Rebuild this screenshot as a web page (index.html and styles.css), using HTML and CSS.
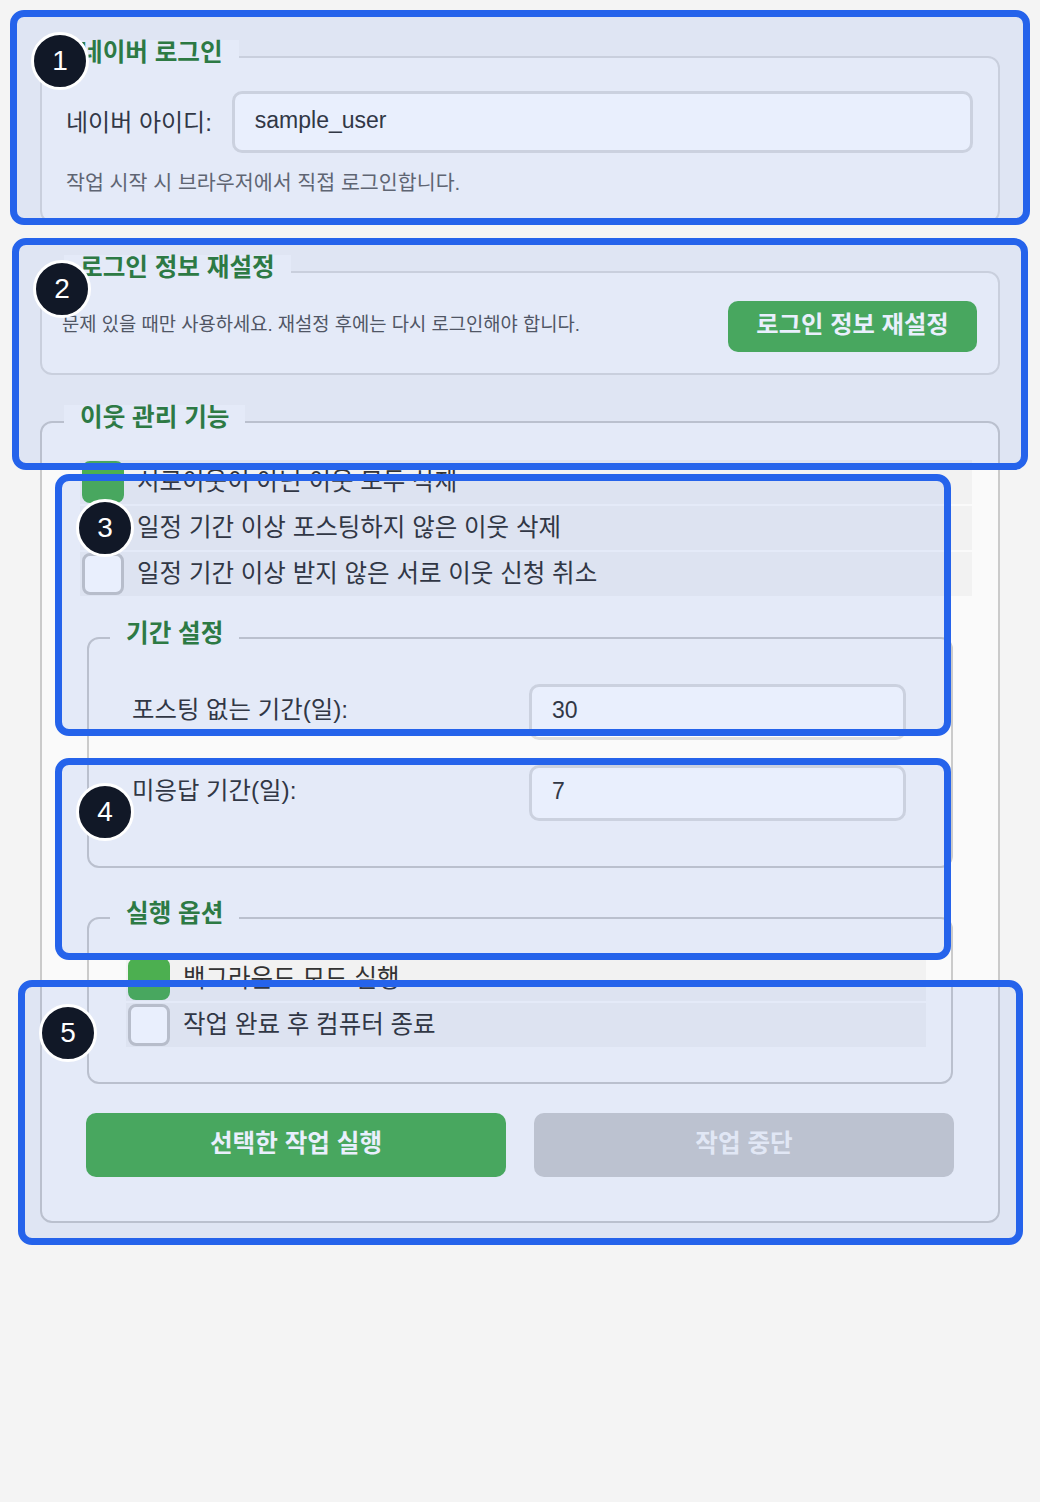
FILE: index.html
```html
<!DOCTYPE html>
<html lang="ko">
<head>
<meta charset="utf-8">
<title>블로그 이웃 관리</title>
<link rel="stylesheet" href="styles.css">
</head>
<body>
<main class="page">
  <fieldset class="panel panel-login">
    <legend>네이버 로그인</legend>
    <div class="login-body">
      <div class="field-row">
        <label class="field-label" for="naver-id">네이버 아이디:</label>
        <input id="naver-id" class="text-input" type="text" value="sample_user">
      </div>
      <p class="hint">작업 시작 시 브라우저에서 직접 로그인합니다.</p>
    </div>
  </fieldset>

  <fieldset class="panel panel-reset">
    <legend>로그인 정보 재설정</legend>
    <div class="reset-row">
      <p class="hint hint-small">문제 있을 때만 사용하세요. 재설정 후에는 다시 로그인해야 합니다.</p>
      <button class="btn btn-green btn-reset" type="button">로그인 정보 재설정</button>
    </div>
  </fieldset>

  <fieldset class="panel panel-neighbors">
    <legend>이웃 관리 기능</legend>
    <div class="neighbors-body">
      <div class="check-list">
        <label class="check-row"><input type="checkbox" checked><span>서로이웃이 아닌 이웃 모두 삭제</span></label>
        <label class="check-row"><input type="checkbox" checked><span>일정 기간 이상 포스팅하지 않은 이웃 삭제</span></label>
        <label class="check-row"><input type="checkbox"><span>일정 기간 이상 받지 않은 서로 이웃 신청 취소</span></label>
      </div>

      <fieldset class="sub-panel sub-period">
        <legend>기간 설정</legend>
        <div class="period-body">
          <div class="period-row">
            <label class="field-label" for="no-post-days">포스팅 없는 기간(일):</label>
            <input id="no-post-days" class="text-input period-input" type="text" value="30">
          </div>
          <div class="period-row">
            <label class="field-label" for="no-reply-days">미응답 기간(일):</label>
            <input id="no-reply-days" class="text-input period-input" type="text" value="7">
          </div>
        </div>
      </fieldset>

      <fieldset class="sub-panel sub-options">
        <legend>실행 옵션</legend>
        <div class="options-body">
          <div class="check-list">
            <label class="check-row"><input type="checkbox" checked><span>백그라운드 모드 실행</span></label>
            <label class="check-row"><input type="checkbox"><span>작업 완료 후 컴퓨터 종료</span></label>
          </div>
        </div>
      </fieldset>

      <div class="actions">
        <button class="btn btn-green btn-run" type="button">선택한 작업 실행</button>
        <button class="btn btn-stop" type="button" disabled>작업 중단</button>
      </div>
    </div>
  </fieldset>
</main>

<div class="marks" aria-hidden="true">
  <div class="mark mark-1"><span class="badge">1</span></div>
  <div class="mark mark-2"><span class="badge">2</span></div>
  <div class="mark mark-3"><span class="badge">3</span></div>
  <div class="mark mark-4"><span class="badge">4</span></div>
  <div class="mark mark-5"><span class="badge">5</span></div>
</div>
</body>
</html>
```

FILE: styles.css
```css
* {
  box-sizing: border-box;
}

html,
body {
  margin: 0;
}

body {
  position: relative;
  width: 1040px;
  min-height: 1502px;
  background: #f4f4f4;
  color: #333;
  font-family: "Liberation Sans", "Noto Sans CJK KR", sans-serif;
}

.page {
  padding: 40px 40px 0;
}

/* ---------- panels ---------- */

.panel {
  margin: 0;
  padding: 0;
  min-width: 0;
  border: 2px solid #dcdcdc;
  border-radius: 12px;
  background: #fafafa;
}

.panel-reset {
  margin-top: 32px;
}

.panel-neighbors {
  margin-top: 30px;
  border-color: #cbcbcb;
}

legend {
  margin-left: 22px;
  padding: 1px 16px 9px;
  height: 34px;
  line-height: 24px;
  font-size: 24.6px;
  font-weight: 700;
  color: #2e7d32;
  background: #fafafa;
}

.login-body {
  padding: 17px 25px 25px 24px;
}

.field-row {
  display: flex;
  align-items: center;
  gap: 20px;
}

.field-label {
  padding-bottom: 4px;
  font-size: 24px;
  color: #333;
  white-space: nowrap;
}

.text-input {
  flex: 1;
  min-width: 0;
  height: 62px;
  margin: 0;
  padding: 0 20px 4px;
  border: 3px solid #dedede;
  border-radius: 10px;
  background: #fff;
  color: #333;
  font-family: inherit;
  font-size: 23px;
  outline: none;
}

.hint {
  margin: 17px 0 0;
  font-size: 20.6px;
  line-height: 26px;
  color: #666;
}

.reset-row {
  display: flex;
  align-items: center;
  justify-content: space-between;
  padding: 12px 21px 21px 20px;
}

.hint-small {
  margin: 0;
  padding-bottom: 4px;
  font-size: 18.75px;
  color: #555;
}

/* ---------- buttons ---------- */

.btn {
  margin: 0;
  padding: 0 0 8px;
  border: 0;
  border-radius: 10px;
  font-family: inherit;
  font-weight: 700;
  cursor: pointer;
}

.btn-green {
  background: #4caf50;
  color: #fff;
}

.btn-reset {
  width: 249px;
  height: 51px;
  font-size: 24.3px;
}

.actions {
  display: flex;
  gap: 28px;
  margin: 29px 18px 0 6px;
}

.actions .btn {
  flex: 1;
  height: 64px;
  font-size: 24.6px;
}

.btn-stop {
  background: #cdcdcd;
  color: #f7f7f7;
  cursor: default;
}

/* ---------- neighbour options ---------- */

.neighbors-body {
  padding: 21px 26px 44px 38px;
}

.check-list {
  display: flex;
  flex-direction: column;
  gap: 2px;
}

.check-row {
  display: flex;
  align-items: center;
  gap: 13px;
  height: 44px;
  padding-left: 2px;
  background: #f2f2f2;
  font-size: 24.5px;
  color: #333;
}

.check-row span {
  padding-bottom: 5px;
}

.check-row input {
  appearance: none;
  -webkit-appearance: none;
  flex: none;
  width: 42px;
  height: 42px;
  margin: 0;
  border: 3px solid #c8c8c8;
  border-radius: 8px;
  background: #fff;
}

.check-row input:checked {
  border-color: #4caf50;
  background: #4caf50;
}

.sub-panel {
  margin: 25px 19px 0 7px;
  padding: 0;
  min-width: 0;
  border: 2px solid #cbcbcb;
  border-radius: 12px;
}

.sub-panel legend {
  margin-left: 21px;
}

.sub-options {
  margin-top: 33px;
}

.period-body {
  display: flex;
  flex-direction: column;
  gap: 25px;
  padding: 29px 45px 45px 43px;
}

.period-row {
  display: flex;
  align-items: center;
}

.period-row .field-label {
  flex: 1;
  padding-bottom: 10px;
  font-size: 24.4px;
}

.period-input {
  flex: none;
  width: 377px;
  height: 56px;
}

.options-body {
  padding: 22px 25px 35px 37px;
}

/* ---------- numbered call-outs ---------- */

.marks {
  position: absolute;
  inset: 0;
  pointer-events: none;
}

.mark {
  position: absolute;
  border: 7px solid #2563eb;
  border-radius: 14px;
  background: rgba(37, 99, 235, 0.1);
}

.mark-1 { left: 10px; top: 10px; width: 1020px; height: 215px; }
.mark-2 { left: 12px; top: 238px; width: 1016px; height: 232px; }
.mark-3 { left: 55px; top: 474px; width: 896px; height: 262px; }
.mark-4 { left: 55px; top: 758px; width: 896px; height: 202px; }
.mark-5 { left: 18px; top: 980px; width: 1005px; height: 265px; }

.badge {
  position: absolute;
  left: 14px;
  top: 15px;
  display: flex;
  align-items: center;
  justify-content: center;
  width: 58px;
  height: 58px;
  border: 3px solid #fff;
  border-radius: 50%;
  background: #111827;
  color: #fff;
  font-family: "Liberation Sans", sans-serif;
  font-size: 28px;
  line-height: 1;
}

.mark-3 .badge,
.mark-4 .badge {
  top: 18px;
}

.mark-5 .badge {
  top: 17px;
}
```
